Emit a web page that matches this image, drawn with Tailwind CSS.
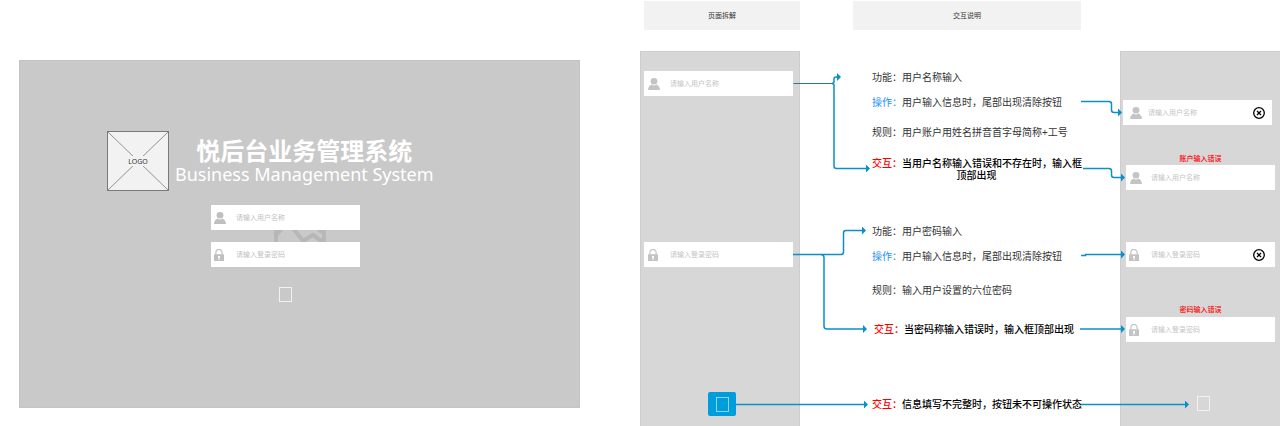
<!DOCTYPE html>
<html lang="zh-CN">
<head>
    <meta charset="UTF-8">
    <meta name="viewport" content="width=device-width, initial-scale=1.0">
    <title>悦后台业务管理系统</title>
    <script src="https://cdn.jsdelivr.net/npm/@tailwindcss/browser@4"></script>
</head>
<body class="bg-white font-['Noto_Sans','Noto_Sans_CJK_SC',sans-serif] text-[#333]">
    <!-- Shared icons -->
    <svg class="hidden">
        <symbol id="icon-user" viewBox="0 0 12 12">
            <ellipse cx="6" cy="3.3" rx="3.4" ry="3.3" />
            <path d="M3.6 6.6C2 7.2.2 8.8 0 12h12c-.2-3.2-2-4.8-3.6-5.4-.7.7-1.5 1-2.4 1s-1.7-.3-2.4-1z" />
        </symbol>
        <symbol id="icon-lock" viewBox="0 0 10 12">
            <path d="M1.9 5.5V3.5a3.1 3.1 0 0 1 6.2 0v2" fill="none" stroke="currentColor" stroke-width="1.2" />
            <path fill-rule="evenodd" d="M0 5.2h10V12H0zM4 7v1.5l.5.5v2h1v-2l.5-.5V7z" />
        </symbol>
        <symbol id="icon-clear" viewBox="0 0 12 12">
            <circle cx="6" cy="6" r="5.3" fill="none" stroke="currentColor" stroke-width="1.3" />
            <path d="M4 4l4 4M8 4l-4 4" fill="none" stroke="currentColor" stroke-width="1.3" />
        </symbol>
    </svg>

    <main class="flex items-start">
        <!-- Login page -->
        <div class="w-1/2 pt-[60px] pl-[19px] pr-[60px]">
            <section class="bg-[#c9c9c9] border border-[#c4c4c4] pt-[70px] pb-[105px] pl-[87px]">
                <header class="flex">
                    <svg class="w-[62px] h-[60px] shrink-0" viewBox="0 0 62 60">
                        <rect x=".5" y=".5" width="61" height="59" fill="#f2f2f2" stroke="#797979" />
                        <path d="M1 1l60 58M61 1L1 59" stroke="#797979" stroke-width=".8" />
                        <rect x="20" y="25" width="22" height="10" fill="#f2f2f2" />
                        <text x="31" y="33" text-anchor="middle" font-size="7" fill="#333">LOGO</text>
                    </svg>
                    <div class="pl-[6px] pt-[7px] text-center text-white whitespace-nowrap">
                        <h1 class="text-[24px] leading-[26px] font-bold">悦后台业务管理系统</h1>
                        <p class="text-[18px] leading-[20px]">Business Management System</p>
                    </div>
                </header>
                <form class="relative mt-[14px] ml-[104px] w-[149px]">
                    <svg class="absolute left-[63px] top-[24px] w-[52px] h-[14px]" viewBox="0 0 52 14" fill="#b7b7b7">
                        <path d="M0 0h10L4 7v7H0zM48 0h4v14h-4z" />
                        <path d="M19 -1l10 13 10-6 10 7M44 0l6 4" fill="none" stroke="#b7b7b7" stroke-width="4" />
                    </svg>
                    <label class="relative flex items-center h-[25px] bg-white pl-[3px] text-[#bfbfbf]">
                        <svg class="w-[12px] h-[12px] fill-current shrink-0"><use href="#icon-user" /></svg>
                        <input type="text" aria-label="用户名称" placeholder="请输入用户名称" class="min-w-0 flex-1 pt-[2px] pl-[10px] text-[7px] outline-none placeholder:text-[#bfbfbf]">
                    </label>
                    <label class="relative flex items-center h-[25px] mt-[12px] bg-white pl-[3px] text-[#bfbfbf]">
                        <svg class="w-[10px] h-[12px] mr-[2px] fill-current shrink-0"><use href="#icon-lock" /></svg>
                        <input type="password" aria-label="登录密码" placeholder="请输入登录密码" class="min-w-0 flex-1 pt-[2px] pl-[10px] text-[7px] outline-none placeholder:text-[#bfbfbf]">
                    </label>
                    <button type="button" aria-label="登录" class="block mx-auto mt-[20px] w-[13px] h-[15px] border border-[#f2f2f2]"></button>
                </form>
            </section>
        </div>

        <!-- Annotations -->
        <div class="relative w-1/2 flex">
            <section class="w-1/4 shrink-0">
                <h2 class="ml-[4px] mt-px h-[29px] leading-[29px] bg-[#f2f2f2] text-center text-[7px]">页面拆解</h2>
                <div class="mt-[21px] h-[375px] bg-[#d7d7d7] border-x border-t border-[#cdcdcd] pt-[19px] pl-[3px] pr-[6px]">
                    <label class="flex items-center h-[25px] bg-white pl-[4px] text-[#c4c4c4]">
                        <svg class="w-[12px] h-[12px] fill-current shrink-0"><use href="#icon-user" /></svg>
                        <input type="text" aria-label="用户名称" placeholder="请输入用户名称" class="min-w-0 flex-1 pt-[2px] pl-[10px] text-[7px] outline-none placeholder:text-[#c4c4c4]">
                    </label>
                    <label class="flex items-center h-[25px] mt-[146px] bg-white pl-[4px] text-[#c4c4c4]">
                        <svg class="w-[10px] h-[12px] mr-[2px] fill-current shrink-0"><use href="#icon-lock" /></svg>
                        <input type="password" aria-label="登录密码" placeholder="请输入登录密码" class="min-w-0 flex-1 pt-[2px] pl-[10px] text-[7px] outline-none placeholder:text-[#c4c4c4]">
                    </label>
                    <div class="flex justify-center mt-[125px] pl-[7px]">
                        <button type="button" aria-label="登录" class="flex items-center justify-center w-[28px] h-[24px] rounded-[2px] bg-[#009ddc]">
                            <span class="w-[13px] h-[15px] border border-[#8fd3f0]"></span>
                        </button>
                    </div>
                </div>
            </section>

            <section class="flex-1 min-w-0 pl-[53px] pr-[39px] text-[10px] leading-[12px] whitespace-nowrap">
                <h2 class="mt-px h-[29px] leading-[29px] bg-[#f2f2f2] text-center text-[7px]">交互说明</h2>
                <div class="pl-[19px] pt-[41px]">
                    <p>功能：用户名称输入</p>
                    <p class="mt-[13px]"><span class="text-[#1e90ff]">操作：</span>用户输入信息时，尾部出现清除按钮</p>
                    <p class="mt-[18px]">规则：用户账户用姓名拼音首字母简称+工号</p>
                    <p class="mt-[19px] text-center text-black font-medium"><span class="text-[#f00]">交互：</span>当用户名称输入错误和不存在时，输入框<br>顶部出现</p>
                    <p class="mt-[44px]">功能：用户密码输入</p>
                    <p class="mt-[13px]"><span class="text-[#1e90ff]">操作：</span>用户输入信息时，尾部出现清除按钮</p>
                    <p class="mt-[22px]">规则：输入用户设置的六位密码</p>
                    <p class="mt-[27px] pl-[2px] text-black font-medium"><span class="text-[#f00]">交互：</span>当密码称输入错误时，输入框顶部出现</p>
                    <p class="mt-[63px] text-black font-medium"><span class="text-[#f00]">交互：</span>信息填写不完整时，按钮未不可操作状态</p>
                </div>
            </section>

            <section class="w-1/4 shrink-0 pt-[51px]">
                <div class="h-[375px] bg-[#d7d7d7] border-l border-t border-[#cdcdcd] pt-[48px] pl-[5px] pr-[5px]">
                    <label class="flex items-center h-[25px] mr-[3px] -ml-[3px] bg-white pl-[7px] pr-[7px] text-[#c4c4c4]">
                        <svg class="w-[12px] h-[12px] fill-current shrink-0"><use href="#icon-user" /></svg>
                        <input type="text" aria-label="用户名称" placeholder="请输入用户名称" class="min-w-0 flex-1 pt-[2px] pl-[6px] text-[7px] outline-none placeholder:text-[#c4c4c4]">
                        <button type="button" aria-label="清除" class="text-black"><svg class="w-[12px] h-[12px]"><use href="#icon-clear" /></svg></button>
                    </label>
                    <p class="mt-[28px] h-[12px] leading-[12px] text-center text-[7px] text-[#f00] font-medium">账户输入错误</p>
                    <label class="flex items-center h-[25px] bg-white pl-[4px] text-[#c4c4c4]">
                        <svg class="w-[12px] h-[12px] fill-current shrink-0"><use href="#icon-user" /></svg>
                        <input type="text" aria-label="用户名称" placeholder="请输入用户名称" class="min-w-0 flex-1 pt-[2px] pl-[9px] text-[7px] outline-none placeholder:text-[#c4c4c4]">
                    </label>
                    <label class="flex items-center h-[25px] mt-[52px] bg-white pl-[3px] pr-[10px] text-[#c4c4c4]">
                        <svg class="w-[10px] h-[12px] mr-[2px] fill-current shrink-0"><use href="#icon-lock" /></svg>
                        <input type="password" aria-label="登录密码" placeholder="请输入登录密码" class="min-w-0 flex-1 pt-[2px] pl-[10px] text-[7px] outline-none placeholder:text-[#c4c4c4]">
                        <button type="button" aria-label="清除" class="text-black"><svg class="w-[12px] h-[12px]"><use href="#icon-clear" /></svg></button>
                    </label>
                    <p class="mt-[37px] h-[13px] leading-[12px] text-center text-[7px] text-[#f00] font-medium">密码输入错误</p>
                    <label class="flex items-center h-[25px] bg-white pl-[3px] text-[#c4c4c4]">
                        <svg class="w-[10px] h-[12px] mr-[2px] fill-current shrink-0"><use href="#icon-lock" /></svg>
                        <input type="password" aria-label="登录密码" placeholder="请输入登录密码" class="min-w-0 flex-1 pt-[2px] pl-[10px] text-[7px] outline-none placeholder:text-[#c4c4c4]">
                    </label>
                    <div class="flex justify-center mt-[54px] pl-[6px]">
                        <button type="button" aria-label="登录" disabled class="w-[13px] h-[15px] border border-[#f2f2f2]"></button>
                    </div>
                </div>
            </section>

            <!-- Connector lines -->
            <svg class="absolute inset-0 w-full h-full pointer-events-none" viewBox="0 0 640 426" preserveAspectRatio="none" fill="none" stroke="#0a8fc9" stroke-width="1.5">
                <defs>
                    <marker id="arrow" viewBox="0 0 4 8" refX="3" refY="4" markerWidth="4" markerHeight="8" markerUnits="userSpaceOnUse" orient="auto">
                        <path d="M0 0L4 4 0 8z" fill="#0a8fc9" stroke="none" />
                    </marker>
                </defs>
                <path d="M153.5 83.5H192" stroke-width="1" stroke="#2d7497" />
                <g marker-end="url(#arrow)">
                    <path d="M192 83.5q2 0 2-2V79q0-2 2-2h4" />
                    <path d="M192 83.5q2 0 2 2V166q0 2.5 2.5 2.5H229" />
                    <path d="M441 101.5h28q2.5 0 2.5 2.5v6q0 2.5 2.5 2.5h7" />
                    <path d="M443 168.5h26q2.5 0 2.5 2.5v4q0 2.5 2.5 2.5h10" />
                    <path d="M153 254.5h48q2.5 0 2.5-2.5V233q0-2.5 2.5-2.5h19" />
                    <path d="M181 254.5q3 0 3 3V326q0 3 3 3h39" />
                    <path d="M441 255.5h4.500v-1H484" />
                    <path d="M440 329H484" />
                    <path d="M96 404.5H227" />
                    <path d="M441 404.5H548" />
                </g>
            </svg>
        </div>
    </main>
</body>
</html>
